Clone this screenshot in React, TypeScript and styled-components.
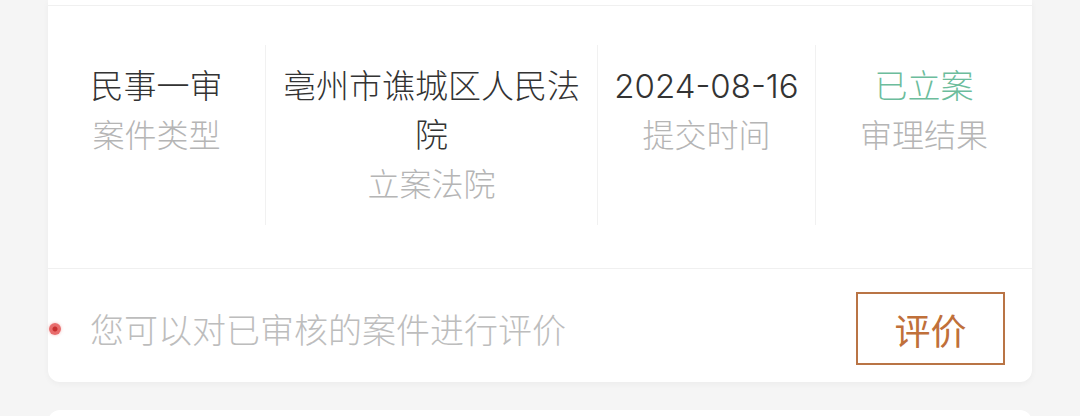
import styled, { createGlobalStyle } from "styled-components";

const GlobalStyle = createGlobalStyle`
  html, body {
    margin: 0;
    padding: 0;
    background: #f5f5f5;
  }
  body {
    font-family: Inter, "Noto Sans CJK SC", sans-serif;
    font-weight: 300;
  }
`;

const items = [
  { value: "民事一审", label: "案件类型" },
  { value: "亳州市谯城区人民法院", label: "立案法院" },
  { value: "2024-08-16", label: "提交时间" },
  { value: "已立案", label: "审理结果", ok: true },
];

const App = () => {
  return (
    <Page>
      <GlobalStyle />
      <Card>
        <CardHead />
        <InfoGrid>
          {items.map((it, i) => (
            <Cell key={it.label} $first={i === 0}>
              <Value $ok={it.ok}>{it.value}</Value>
              <Label>{it.label}</Label>
            </Cell>
          ))}
        </InfoGrid>
        <Footer>
          <Hint>
            <Dot />
            您可以对已审核的案件进行评价
          </Hint>
          <RateButton>评价</RateButton>
        </Footer>
      </Card>
      <NextCard />
    </Page>
  );
};
export default App;

const Page = styled.div`
  padding: 0 48px;
  height: 416px;
  overflow: hidden;
`;

const Card = styled.div`
  background: #fff;
  border-radius: 0 0 12px 12px;
  box-shadow: 0 2px 6px rgba(0, 0, 0, 0.04);
`;

const CardHead = styled.div`
  height: 5px;
  border-bottom: 1px solid #f0f0f0;
`;

const InfoGrid = styled.div`
  display: grid;
  grid-template-columns: 217px 332px 218px 217px;
  padding: 39px 0 43px;
  border-bottom: 1px solid #f0f0f0;
`;

const Cell = styled.div<{ $first?: boolean }>`
  display: flex;
  flex-direction: column;
  align-items: center;
  padding: 17px 12px 16px;
  min-height: 180px;
  box-sizing: border-box;
  text-align: center;
  border-left: ${(p) => (p.$first ? "none" : "1px solid #f1f1f1")};
`;

const Value = styled.div<{ $ok?: boolean }>`
  font-size: 33px;
  line-height: 49px;
  color: ${(p) => (p.$ok ? "#6cbd9c" : "#333333")};
`;

const Label = styled.div`
  font-size: 32px;
  line-height: 49px;
  color: #b5b5b5;
`;

const Footer = styled.div`
  display: flex;
  align-items: center;
  justify-content: space-between;
  padding: 23px 27px 17px 1px;
`;

const Hint = styled.div`
  display: flex;
  align-items: center;
  gap: 29px;
  font-size: 34px;
  color: #bdbdbd;
`;

const Dot = styled.span`
  width: 12px;
  height: 12px;
  border-radius: 50%;
  background: radial-gradient(circle, #c62f2f 0 2px, #e86c6c 3px);
  box-shadow: 0 0 3px rgba(232, 108, 108, 0.5);
`;

const RateButton = styled.button`
  width: 149px;
  height: 73px;
  border: 2px solid #b97445;
  background: #fff;
  color: #c0703a;
  font-family: inherit;
  font-weight: 400;
  font-size: 36px;
  padding: 0;
`;

const NextCard = styled.div`
  margin-top: 28px;
  height: 40px;
  background: #fff;
  border-radius: 12px 12px 0 0;
`;
